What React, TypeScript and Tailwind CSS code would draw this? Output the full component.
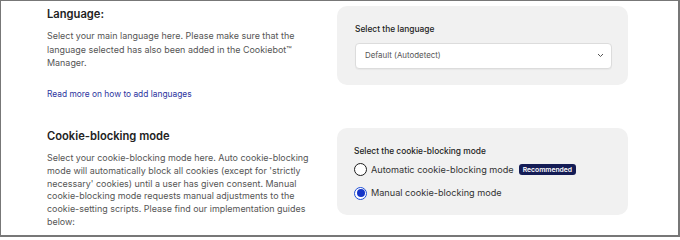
import React from "react";

const FONT = { fontFamily: "Inter, 'Noto Sans', sans-serif" };

function Radio({ checked }: { checked?: boolean }) {
  return checked ? (
    <span className="flex h-[13px] w-[13px] shrink-0 items-center justify-center rounded-full border-[1.5px] border-[#1f4fd6] bg-white">
      <span className="h-[8px] w-[8px] rounded-full bg-[#1636c8]" />
    </span>
  ) : (
    <span className="h-[13px] w-[13px] shrink-0 rounded-full border-[1.5px] border-[#1c1c1c] bg-white" />
  );
}

export default function App() {
  return (
    <div
      style={FONT}
      className="h-[237px] w-[680px] overflow-hidden border-t border-l border-r-2 border-b-2 border-[#777] bg-white"
    >
      {/* Language */}
      <div className="flex h-[117px]">
        <div className="w-[266px] shrink-0 pl-[46px] pt-[5px] box-content">
          <h2 className="text-[11.2px] font-semibold leading-[16px] text-[#222]">Language:</h2>
          <p className="mt-[7px] text-[8.95px] leading-[13.5px] text-[#555]">
            Select your main language here. Please make sure that the language selected has also been added in the Cookiebot™ Manager.
          </p>
          <a className="mt-[18.5px] block text-[8.4px] leading-[13.4px] text-[#2d35a0]">
            Read more on how to add languages
          </a>
        </div>
        <div className="ml-auto mr-[50px] mt-[5px] h-[79px] w-[291px] rounded-[10px] bg-[#f1f1f1] pl-[18px] pr-[16px] pt-[17px]">
          <div className="text-[8.4px] font-medium leading-[12px] text-[#222]">Select the language</div>
          <div className="mt-[7.5px] flex h-[26px] items-center justify-between rounded-[4px] border border-[#dcdcdc] bg-white pl-[9px] pr-[7px] shadow-[0_1px_1px_rgba(0,0,0,0.04)]">
            <span className="text-[7.9px] text-[#555]">Default (Autodetect)</span>
            <svg width="7" height="5" viewBox="0 0 7 5" fill="none">
              <path d="M1 1l2.5 2.5L6 1" stroke="#555" strokeWidth="1" />
            </svg>
          </div>
        </div>
      </div>

      {/* Cookie-blocking mode */}
      <div className="flex">
        <div className="w-[266px] shrink-0 pl-[46px] pt-[10px] box-content">
          <h2 className="text-[11.2px] font-semibold leading-[16px] text-[#222]">Cookie-blocking mode</h2>
          <p className="mt-[8px] text-[8.95px] leading-[12.8px] text-[#555]">
            Select your cookie-blocking mode here. Auto cookie-blocking mode will automatically block all cookies (except for 'strictly necessary' cookies) until a user has given consent. Manual cookie-blocking mode requests manual adjustments to the cookie-setting scripts. Please find our implementation guides below:
          </p>
        </div>
        <div className="ml-auto mr-[50px] mt-[10px] h-[87px] w-[291px] shrink-0 rounded-[10px] bg-[#f1f1f1] pl-[17px] pt-[17px]">
          <div className="text-[8.4px] font-medium leading-[12px] text-[#222]">Select the cookie-blocking mode</div>
          <div className="mt-[4.5px] flex h-[16px] items-center gap-[4px]">
            <Radio />
            <span className="text-[9.15px] text-[#333]">Automatic cookie-blocking mode</span>
            <span className="ml-[1px] rounded-[3px] bg-[#141c55] px-[4px] text-[6.8px] font-semibold leading-[11px] text-white">
              Recommended
            </span>
          </div>
          <div className="mt-[7.5px] flex h-[16px] items-center gap-[4px]">
            <Radio checked />
            <span className="text-[9.15px] text-[#333]">Manual cookie-blocking mode</span>
          </div>
        </div>
      </div>
    </div>
  );
}
